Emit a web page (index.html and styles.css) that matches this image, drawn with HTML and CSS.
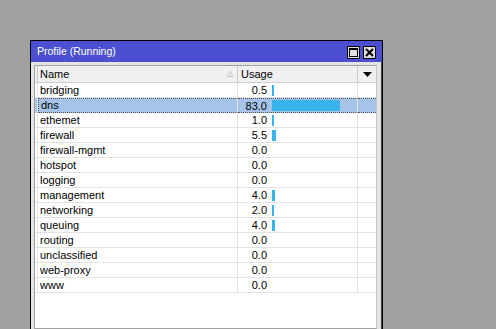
FILE: index.html
```html
<!DOCTYPE html>
<html lang="en">
<head>
  <meta charset="UTF-8">
  <title>Profile (Running)</title>
  <link rel="stylesheet" href="styles.css">
</head>
<body>
  <div class="window">
    <div class="titlebar">
      <span class="title">Profile (Running)</span>
      <span class="tbtn">
        <svg width="11" height="11" viewBox="0 0 11 11"><rect x="1.5" y="1.5" width="8" height="8" fill="none" stroke="#000" stroke-width="1"/><rect x="1" y="1" width="9" height="2" fill="#000"/></svg>
      </span>
      <span class="tbtn">
        <svg width="11" height="11" viewBox="0 0 11 11"><path d="M2 2 L9 9 M9 2 L2 9" stroke="#000" stroke-width="2"/></svg>
      </span>
    </div>
    <div class="frame">
      <div class="list">
        <div class="row head">
          <div class="stub"></div>
          <div class="cell name">Name <span class="sort">&#9651;</span></div>
          <div class="cell usage">Usage</div>
          <div class="cell menu">
            <svg width="9" height="5" viewBox="0 0 9 5"><path d="M0 0 H9 L4.5 5 Z" fill="#000"/></svg>
          </div>
        </div>

        <div class="row"><div class="stub"></div><div class="cell name">bridging</div><div class="cell usage"><span class="val">0.5</span><span class="bar" style="width:2px"></span></div><div class="cell menu"></div></div>
        <div class="row selected"><div class="stub"></div><div class="cell name">dns</div><div class="cell usage"><span class="val">83.0</span><span class="bar" style="width:68px"></span></div><div class="cell menu"></div></div>
        <div class="row"><div class="stub"></div><div class="cell name">ethemet</div><div class="cell usage"><span class="val">1.0</span><span class="bar" style="width:2px"></span></div><div class="cell menu"></div></div>
        <div class="row"><div class="stub"></div><div class="cell name">firewall</div><div class="cell usage"><span class="val">5.5</span><span class="bar" style="width:4px"></span></div><div class="cell menu"></div></div>
        <div class="row"><div class="stub"></div><div class="cell name">firewall-mgmt</div><div class="cell usage"><span class="val">0.0</span></div><div class="cell menu"></div></div>
        <div class="row"><div class="stub"></div><div class="cell name">hotspot</div><div class="cell usage"><span class="val">0.0</span></div><div class="cell menu"></div></div>
        <div class="row"><div class="stub"></div><div class="cell name">logging</div><div class="cell usage"><span class="val">0.0</span></div><div class="cell menu"></div></div>
        <div class="row"><div class="stub"></div><div class="cell name">management</div><div class="cell usage"><span class="val">4.0</span><span class="bar" style="width:3px"></span></div><div class="cell menu"></div></div>
        <div class="row"><div class="stub"></div><div class="cell name">networking</div><div class="cell usage"><span class="val">2.0</span><span class="bar" style="width:2px"></span></div><div class="cell menu"></div></div>
        <div class="row"><div class="stub"></div><div class="cell name">queuing</div><div class="cell usage"><span class="val">4.0</span><span class="bar" style="width:3px"></span></div><div class="cell menu"></div></div>
        <div class="row"><div class="stub"></div><div class="cell name">routing</div><div class="cell usage"><span class="val">0.0</span></div><div class="cell menu"></div></div>
        <div class="row"><div class="stub"></div><div class="cell name">unclassified</div><div class="cell usage"><span class="val">0.0</span></div><div class="cell menu"></div></div>
        <div class="row"><div class="stub"></div><div class="cell name">web-proxy</div><div class="cell usage"><span class="val">0.0</span></div><div class="cell menu"></div></div>
        <div class="row"><div class="stub"></div><div class="cell name">www</div><div class="cell usage"><span class="val">0.0</span></div><div class="cell menu"></div></div>
      </div>
    </div>
  </div>
</body>
</html>
```

FILE: styles.css
```css
html, body {
  margin: 0;
  height: 100%;
  overflow: hidden;
}
body {
  background-color: #a0a0a0;
  font-family: "Liberation Sans", Arial, sans-serif;
  font-size: 11px;
  color: #000;
  padding: 40px 0 0 30px;
  box-sizing: border-box;
}
.window {
  width: 353px;
  border: 1px solid #000;
  border-bottom: none;
  box-sizing: border-box;
  background-color: #e4e4e4;
}
.titlebar {
  height: 21px;
  background-color: #4c50d0;
  display: flex;
  align-items: center;
  padding: 0 6px 0 6px;
  gap: 3px;
}
.title {
  color: #fff;
  flex: 1;
  line-height: 21px;
  font-size: 10.5px;
}
.tbtn {
  width: 13px;
  height: 13px;
  box-sizing: border-box;
  border: 1px solid #000;
  background-color: #dedede;
  display: flex;
  align-items: center;
  justify-content: center;
  margin-top: 1px;
}
.tbtn svg {
  display: block;
}
.frame {
  padding: 3px 4px 6px 3px;
  border-right: 1px solid #404040;
}
.list {
  height: 262px;
  background-color: #fff;
  border: 1px solid #a0a0a0;
  border-right-color: #c8c8c8;
}
.row {
  display: grid;
  grid-template-columns: 3px 200px 120px 1fr;
  height: 15px;
  border-bottom: 1px solid #e2e2e2;
  box-sizing: border-box;
}
.row > div {
  border-right: 1px solid #e2e2e2;
}
.row > div:last-child {
  border-right: none;
}
.row.head {
  height: 17px;
  background-color: #f0f0f0;
  border-bottom: 1px solid #d0d0d0;
}
.row.head > div {
  border-right-color: #c8c8c8;
}
.cell {
  line-height: 14px;
  white-space: nowrap;
  overflow: hidden;
}
.head .cell {
  line-height: 16px;
}
.name {
  padding-left: 2px;
  position: relative;
}
.sort {
  position: absolute;
  right: 4px;
  top: 0;
  color: #a8a8a8;
  font-size: 8px;
}
.usage {
  display: flex;
  align-items: center;
}
.head .usage {
  padding-left: 3px;
}
.val {
  display: inline-block;
  width: 29px;
  text-align: right;
}
.bar {
  display: inline-block;
  height: 11px;
  margin-left: 5px;
  background-color: #38b4ec;
}
.menu {
  display: flex;
  align-items: center;
  justify-content: center;
}
.selected {
  background-color: #a6c4ea;
  border-bottom: none;
}
.selected .name,
.selected .usage,
.selected .menu {
  border-top: 1px dotted #555;
  border-bottom: 1px dotted #555;
}
.selected .name {
  border-left: 1px dotted #555;
}
.selected .menu {
  border-right: 1px dotted #555;
}
.selected .cell {
  line-height: 12px;
}
```
